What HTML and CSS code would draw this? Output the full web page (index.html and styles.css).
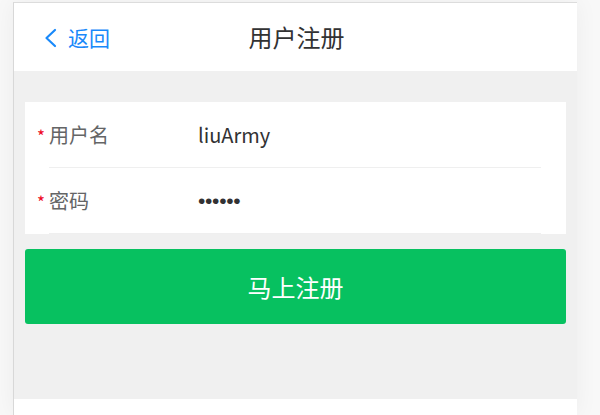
FILE: index.html
```html
<!DOCTYPE html>
<html lang="zh-CN">
<head>
<meta charset="utf-8">
<title>用户注册</title>
<link rel="stylesheet" href="styles.css">
</head>
<body>
<div class="frame">
  <header class="navbar">
    <a class="nav-back">
      <svg class="chev" width="14" height="20" viewBox="0 0 14 20"><path d="M12 2 L3.5 10 L12 18" fill="none" stroke="#1989fa" stroke-width="2.2" stroke-linecap="round" stroke-linejoin="round"/></svg>
      <span class="back-text">返回</span>
    </a>
    <div class="nav-title">用户注册</div>
  </header>
  <main class="content">
    <div class="card">
      <div class="field">
        <span class="req">*</span>
        <div class="field-body">
          <span class="label">用户名</span>
          <span class="value">liuArmy</span>
        </div>
      </div>
      <div class="field">
        <span class="req">*</span>
        <div class="field-body">
          <span class="label">密码</span>
          <span class="value dots">••••••</span>
        </div>
      </div>
    </div>
    <button class="submit">马上注册</button>
  </main>
  <footer class="foot"></footer>
</div>
</body>
</html>
```

FILE: styles.css
```css
html, body {
  margin: 0;
  padding: 0;
  height: 100%;
  overflow: hidden;
}
body {
  background: #f8f8f8;
  font-family: "Noto Sans CJK SC", "Noto Sans", sans-serif;
}
.frame {
  margin: 2px 0 0 13px;
  width: 564px;
  height: calc(100vh - 2px);
  box-sizing: border-box;
  border-top: 1px solid #dcdcdc;
  border-left: 1px solid #d8d8d8;
  background: #f0f0f0;
  box-shadow: 0 0 22px rgba(0, 0, 0, 0.05);
  display: flex;
  flex-direction: column;
}
.navbar {
  position: relative;
  height: 68px;
  background: #fff;
  display: flex;
  align-items: center;
  justify-content: center;
  flex-shrink: 0;
}
.nav-back {
  position: absolute;
  left: 29px;
  top: 0;
  bottom: 0;
  display: flex;
  align-items: center;
  color: #1989fa;
}
.chev {
  display: block;
  margin-top: 1px;
}
.back-text {
  font-size: 21px;
  margin-left: 11px;
  line-height: 1;
}
.nav-title {
  font-size: 24px;
  color: #323233;
  line-height: 1;
  margin-left: 2px;
}
.content {
  padding: 31px 11px 0 11px;
  height: 328px;
  box-sizing: border-box;
  flex-shrink: 0;
}
.card {
  background: #fff;
}
.field {
  display: flex;
  align-items: stretch;
  padding-left: 12px;
}
.req {
  width: 12px;
  color: #ee0a24;
  font-size: 17px;
  line-height: 1;
  padding-top: 25px;
  box-sizing: border-box;
}
.field-body {
  flex: 1;
  margin-right: 25px;
  height: 65px;
  border-bottom: 1px solid #efefef;
  display: flex;
  align-items: center;
}
.label {
  width: 149px;
  font-size: 20px;
  color: #646566;
}
.value {
  font-size: 20px;
  color: #323233;
}
.dots {
  font-family: "Liberation Sans", sans-serif;
  font-size: 21px;
  letter-spacing: -0.3px;
}
.submit {
  display: block;
  margin-top: 15px;
  width: 100%;
  height: 75px;
  border: 0;
  border-radius: 3px;
  background: #07c160;
  color: #fff;
  font-family: "Noto Sans CJK SC", "Noto Sans", sans-serif;
  font-size: 24px;
  padding: 0;
}
.foot {
  flex: 1;
  background: #fff;
}
```
